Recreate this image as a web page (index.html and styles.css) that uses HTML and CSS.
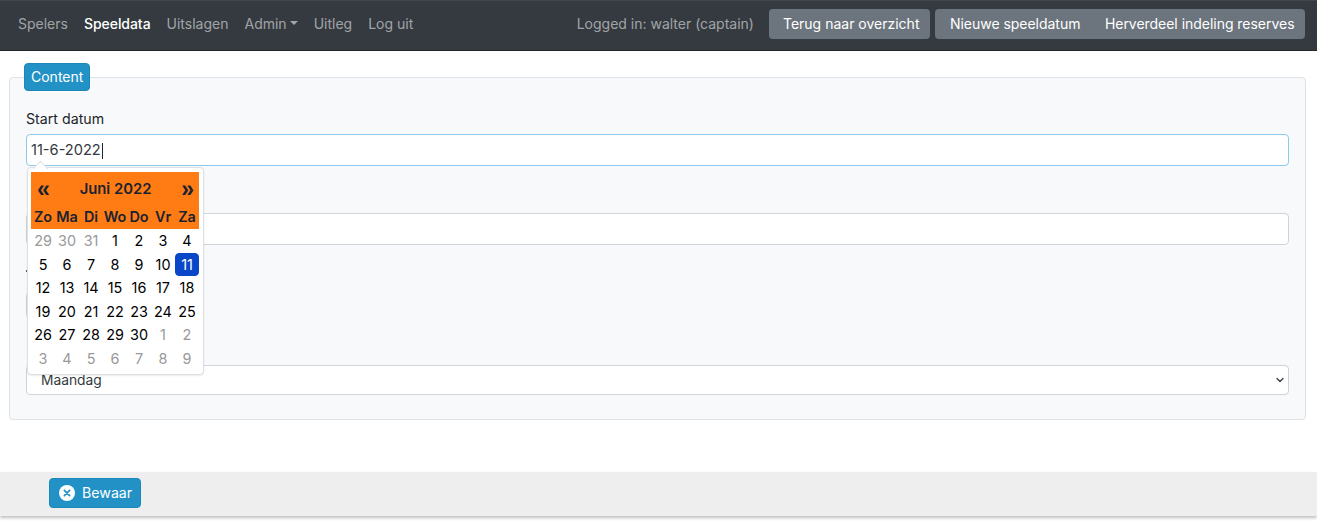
FILE: index.html
```html
<!DOCTYPE html>
<html lang="nl">
<head>
<meta charset="utf-8">
<title>Speeldata</title>
<link rel="stylesheet" href="styles.css">
</head>
<body>
<nav class="navbar">
  <div class="nav-links">
    <a class="nav-link">Spelers</a>
    <a class="nav-link active">Speeldata</a>
    <a class="nav-link">Uitslagen</a>
    <a class="nav-link caret">Admin</a>
    <a class="nav-link">Uitleg</a>
    <a class="nav-link">Log uit</a>
  </div>
  <div class="nav-right">
    <span class="logged">Logged in: walter (captain)</span>
    <a class="btn-grey">Terug naar overzicht</a>
    <div class="btn-group">
      <a class="btn-grey">Nieuwe speeldatum</a>
      <a class="btn-grey">Herverdeel indeling reserves</a>
    </div>
  </div>
</nav>
<main class="content">
  <fieldset class="panel">
    <legend class="legend">Content</legend>
    <div class="group">
      <label class="label">Start datum</label>
      <div class="input focus">11-6-2022<span class="cursor"></span></div>
      <div class="calendar">
        <div class="cal-head">
          <div class="cal-title"><span class="cal-arrow">«</span><span>Juni 2022</span><span class="cal-arrow">»</span></div>
          <div class="cal-row"><span>Zo</span><span>Ma</span><span>Di</span><span>Wo</span><span>Do</span><span>Vr</span><span>Za</span></div>
        </div>
        <div class="cal-row"><span class="old">29</span><span class="old">30</span><span class="old">31</span><span>1</span><span>2</span><span>3</span><span>4</span></div>
        <div class="cal-row"><span>5</span><span>6</span><span>7</span><span>8</span><span>9</span><span>10</span><span class="sel">11</span></div>
        <div class="cal-row"><span>12</span><span>13</span><span>14</span><span>15</span><span>16</span><span>17</span><span>18</span></div>
        <div class="cal-row"><span>19</span><span>20</span><span>21</span><span>22</span><span>23</span><span>24</span><span>25</span></div>
        <div class="cal-row"><span>26</span><span>27</span><span>28</span><span>29</span><span>30</span><span class="old">1</span><span class="old">2</span></div>
        <div class="cal-row"><span class="old">3</span><span class="old">4</span><span class="old">5</span><span class="old">6</span><span class="old">7</span><span class="old">8</span><span class="old">9</span></div>
      </div>
    </div>
    <div class="group">
      <div class="label"></div>
      <div class="input"></div>
    </div>
    <div class="group">
      <div class="label peek"></div>
      <div class="input narrow"></div>
    </div>
    <div class="group">
      <div class="label"></div>
      <div class="input select">Maandag
        <svg class="chev" viewBox="0 0 16 16" width="8" height="8"><path d="M2 5l6 6 6-6" fill="none" stroke="#343a40" stroke-width="2.6" stroke-linecap="round" stroke-linejoin="round"/></svg>
      </div>
    </div>
  </fieldset>
</main>
<footer class="footer">
  <a class="save">
    <svg class="save-icon" viewBox="0 0 16 16" width="16" height="16"><circle cx="8" cy="8" r="8" fill="#fff"/><path d="M5.4 5.4l5.2 5.2M10.6 5.4l-5.2 5.2" stroke="#2292c6" stroke-width="1.8" stroke-linecap="round"/></svg>
    Bewaar
  </a>
</footer>
</body>
</html>
```
FILE: styles.css
```css
* { box-sizing: border-box; }
html, body { margin: 0; padding: 0; }
body {
  width: 1317px;
  height: 529px;
  overflow: hidden;
  background: #fff;
  color: #212529;
  font-family: Inter, "Liberation Sans", sans-serif;
  font-size: 14px;
  line-height: 1.5;
}
.navbar {
  height: 51px;
  background: #343a40;
  border-top: 1px solid #42474d;
  border-bottom: 1px solid #23272b;
  display: flex;
  justify-content: space-between;
  align-items: center;
  padding: 0 12px 3px 18px;
}
.nav-links { display: flex; gap: 16px; margin-bottom: 2px; }
.nav-link { color: rgba(255,255,255,.55); }
.nav-link.active { color: #fff; font-weight: 500; letter-spacing: -.05px; }
.caret { display: flex; align-items: center; }
.caret::after {
  content: "";
  margin-left: 3px;
  border-top: 4px solid;
  border-left: 4px solid transparent;
  border-right: 4px solid transparent;
}
.nav-right { display: flex; align-items: center; gap: 6px; }
.logged { color: rgba(255,255,255,.55); margin: 0 9px 2px 0; }
.btn-group { display: flex; border-radius: 4px; overflow: hidden; }
.btn-grey {
  display: block;
  height: 30px;
  line-height: 29px;
  padding: 0 10.5px 0 14px;
  background: #6c757d;
  color: #fff;
  border-radius: 4px;
}
.btn-group { padding-left: 0; margin-left: -1px; }
.btn-group .btn-grey { border-radius: 0; letter-spacing: -.03px; }
.btn-group .btn-grey:first-child { padding-left: 15px; }
.content { padding: 12px 11px 0 9px; }
.panel {
  margin: 0;
  padding: 0 16px 24px;
  border: 1px solid #dee2e6;
  border-radius: 4px;
  background: #f8f9fa;
  display: block;
  min-width: 0;
}
.legend {
  float: none;
  width: auto;
  margin-left: -2px;
  height: 28px;
  line-height: 26px;
  padding: 0 6px;
  background: #2292c6;
  border: 1px solid #1b86b8;
  border-radius: 4px;
  color: #fff;
}
.group { position: relative; margin-top: 21px; }
.legend + .group { margin-top: 17px; }
.label { display: block; position: relative; height: 21px; line-height: 21px; color: #212529; font-size: 14.2px; }
.peek::before {
  content: "";
  position: absolute;
  left: 0;
  top: 4px;
  width: 1px;
  height: 2px;
  background: #5a5f64;
}
.input {
  height: 32px;
  margin-top: 5px;
  padding: 0 4px;
  line-height: 30px;
  font-size: 14.6px;
  background: #fff;
  border: 1px solid #ced4da;
  border-radius: 4px;
  color: #343a40;
}
.input.focus { border-color: #8ccbe9; }
.input.narrow { width: 100px; height: 26px; }
.cursor {
  display: inline-block;
  width: 1px;
  height: 16px;
  margin-left: 1px;
  background: #212529;
  vertical-align: middle;
}
.select {
  display: flex;
  justify-content: space-between;
  align-items: center;
  height: 30px;
  padding: 0 4px 0 14px;
  font-size: 13.8px;
}
.chev { flex: none; }
.calendar {
  position: absolute;
  left: 1px;
  top: 59px;
  width: 177px;
  height: 208px;
  padding: 4px 4px 4px 3px;
  background: #fff;
  border: 1px solid #dcdfe3;
  border-radius: 4px;
  box-shadow: 0 1px 2px rgba(0,0,0,.08);
  z-index: 5;
  color: #000;
  font-size: 14.4px;
}
.calendar::before {
  content: "";
  position: absolute;
  top: -5px;
  left: 7px;
  width: 10px;
  height: 10px;
  background: #fff;
  border-left: 1px solid #dcdfe3;
  border-top: 1px solid #dcdfe3;
  transform: rotate(45deg);
}
.cal-head {
  position: relative;
  background: #ff7c14;
  color: #1a2230;
  font-weight: 600;
}
.cal-title {
  display: flex;
  justify-content: space-between;
  align-items: center;
  height: 33px;
  padding: 2px 5px 0 6px;
  font-size: 14.8px;
}
.cal-arrow { font-family: "Liberation Sans", sans-serif; font-size: 23px; line-height: 1; font-weight: 700; }
.cal-row {
  display: grid;
  grid-template-columns: repeat(7, 24px);
  height: 23.6px;
  align-items: center;
  justify-items: center;
  line-height: 23.6px;
}
.cal-head .cal-row { height: 24px; }
.cal-row span { display: block; width: 24px; text-align: center; white-space: nowrap; }
.old { color: #999; }
.cal-row .sel { background: #0a46c8; color: #fff; border-radius: 4px; border: 1px solid #0a46c8; line-height: 21.6px; }
.footer {
  position: absolute;
  left: 0;
  top: 472px;
  width: 100%;
  height: 44px;
  background: #eee;
  box-shadow: 0 2px 3px rgba(0,0,0,.25);
  padding: 6px 0 0 49px;
}
.save {
  display: inline-flex;
  align-items: center;
  gap: 7px;
  height: 30px;
  padding: 0 8px 0 9px;
  background: #2292c6;
  border: 1px solid #1b86b8;
  border-radius: 4px;
  color: #fff;
  font-size: 14.2px;
}
```
